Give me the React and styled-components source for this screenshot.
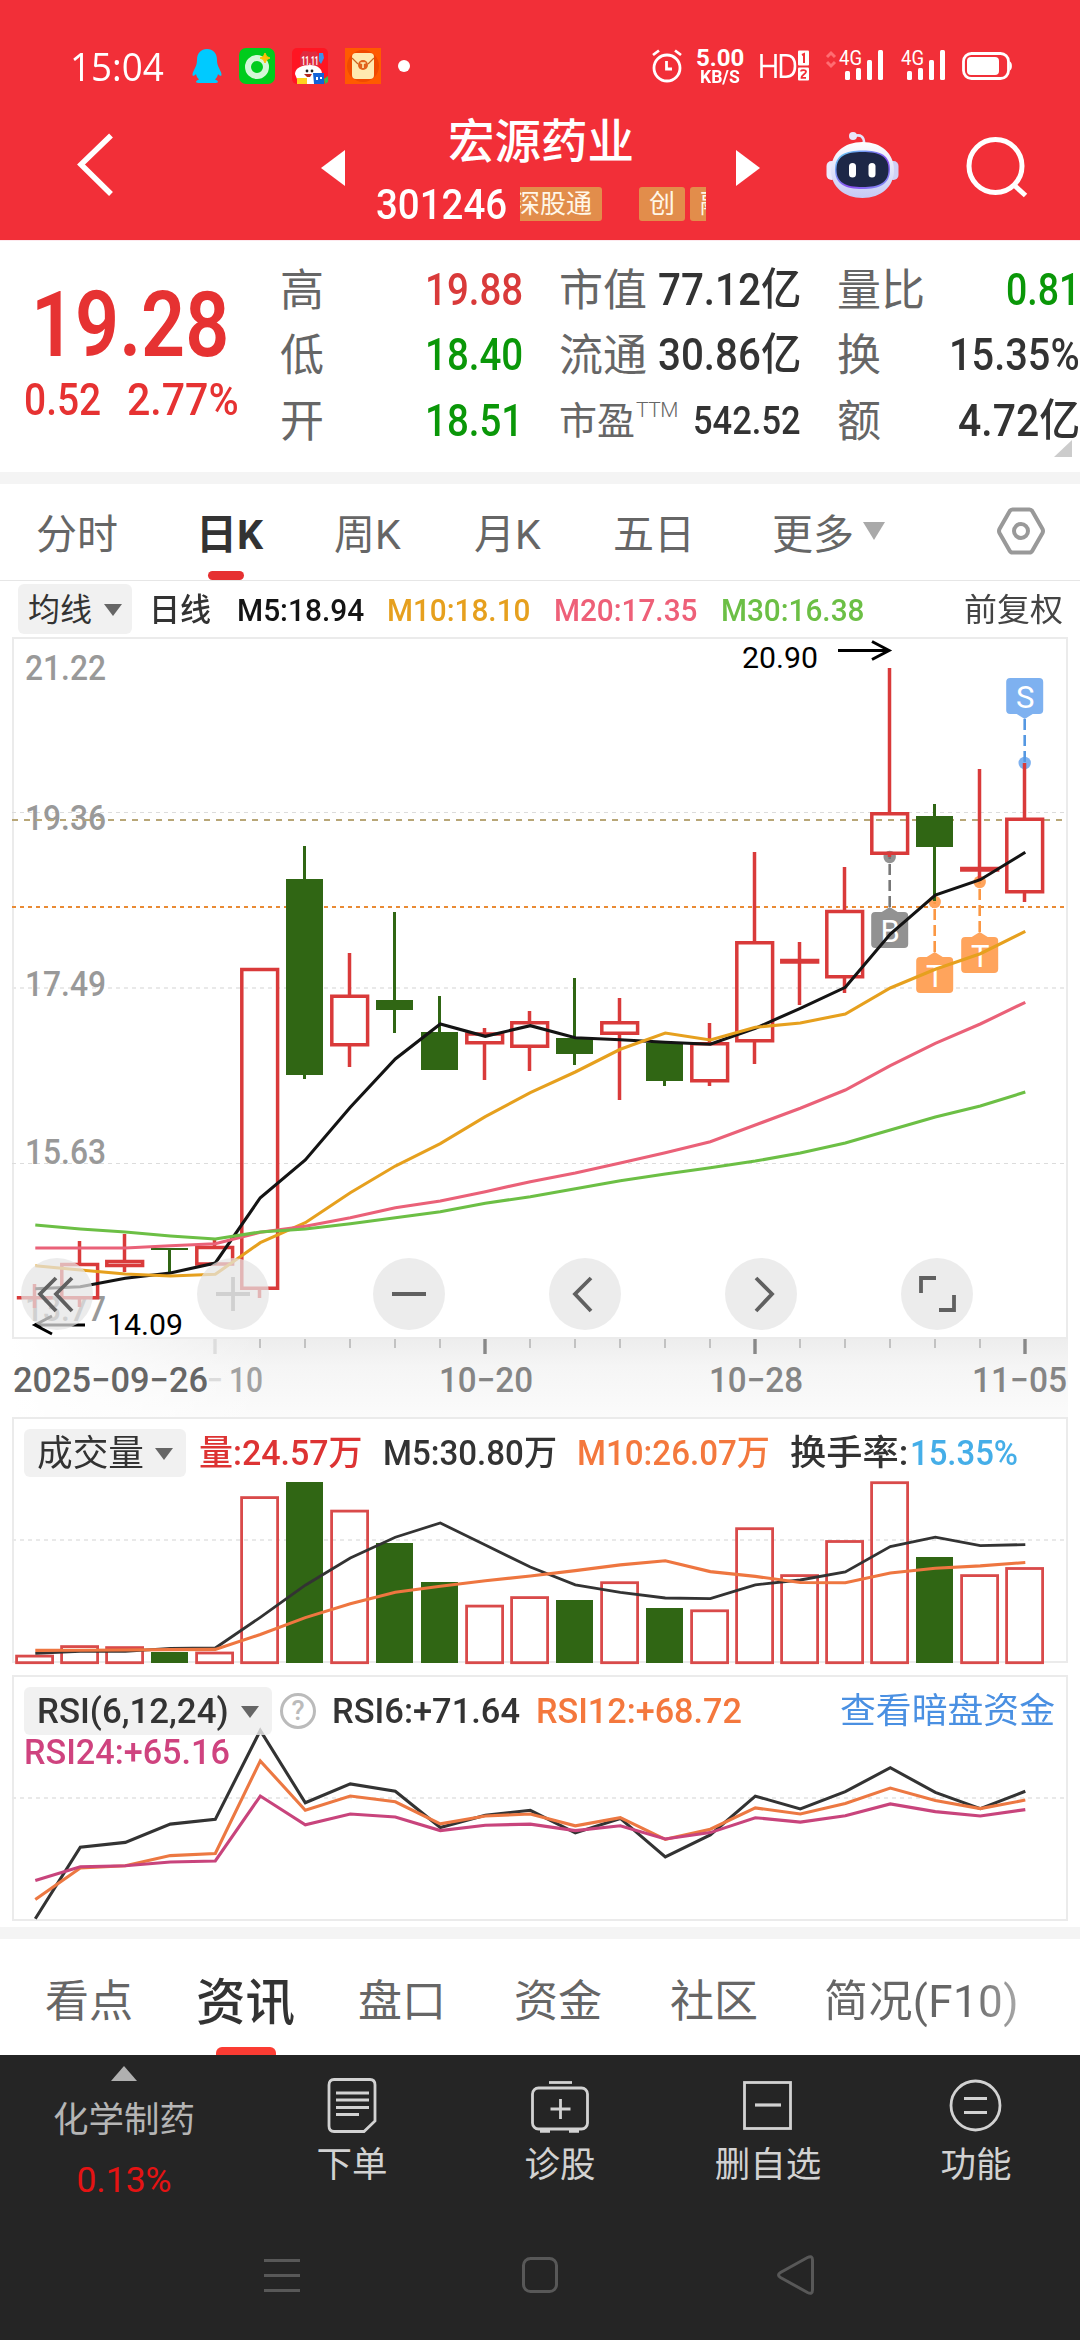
import React, { useLayoutEffect, useRef, useState } from "react";
import styled, { createGlobalStyle } from "styled-components";

const UP = "#d93a3a";
const DOWN = "#306614";
const FONT = `Roboto, "Noto Sans CJK SC", sans-serif`;

const GlobalStyle = createGlobalStyle`
  * {
    box-sizing: border-box;
  }
  body {
    margin: 0;
    background: #fff;
    font-family: ${FONT};
  }
  svg {
    display: block;
    flex: none;
    overflow: visible;
  }
`;
const Page = styled.div`
  width: 1080px;
  height: 2340px;
  overflow: hidden;
  background: #fff;
`;

const FitBox = styled.span`
  display: inline-block;
  flex: none;
  width: ${(p) => p.$w}px;
  white-space: nowrap;
`;
const FitText = styled.span`
  display: inline-block;
  transform-origin: left center;
`;
function Fit({ w, children }) {
  const ref = useRef(null);
  const [scale, setScale] = useState(1);
  useLayoutEffect(() => {
    setScale(w / ref.current.offsetWidth);
  }, [w, children]);
  return (
    <FitBox $w={w}>
      <FitText ref={ref} style={{ transform: `scaleX(${scale})` }}>
        {children}
      </FitText>
    </FitBox>
  );
}

/* ---------- status bar ---------- */
const StatusBar = styled.div`
  height: 100px;
  padding: 32px 68px 0 70px;
  background: #f22f38;
  color: #fff;
  display: flex;
  align-items: center;
  justify-content: space-between;
`;
const StatusGroup = styled.div`
  display: flex;
  align-items: center;
  gap: ${(p) => p.$gap}px;
`;
const Clock = styled.span`
  font-family: "Open Sans", sans-serif;
  font-size: 38px;
  line-height: 40px;
  margin-right: 11px;
`;
const NetSpeed = styled.div`
  display: flex;
  flex-direction: column;
  align-items: center;
  margin-left: -3px;
  font-weight: 700;
  font-size: 24px;
  line-height: 20px;
  > span:last-child {
    font-size: 18px;
    line-height: 17px;
  }
`;
const Dot = styled.i`
  width: 12px;
  height: 12px;
  border-radius: 50%;
  background: #fff;
`;

const PenguinIcon = () => (
  <svg width="30" height="36" viewBox="0 0 30 36">
    <path
      d="M15 1C9 1 5 5 5 12c0 3-.5 5-2 8-1.500 3-3 6-2.400 7.500.6 1 2.400-.3 3.400-1.500.5 2.500 1.500 4 3 5.500-1.500.5-3 1.300-3 2.500 0 1 3 1 10 1h2c7 0 10 0 10-1 0-1.200-1.500-2-3-2.500 1.500-1.500 2.500-3 3-5.500 1 1.200 2.800 2.500 3.400 1.500.6-1.500-.9-4.500-2.400-7.500-1.500-3-2-5-2-8C25 5 21 1 15 1Z"
      fill="#00caff"
    />
  </svg>
);
const GreenAppIcon = () => (
  <svg width="36" height="36" viewBox="0 0 36 36">
    <rect width="36" height="36" rx="7" fill="#00cc1c" />
    <circle cx="18" cy="19" r="9" fill="none" stroke="#d4f7d8" strokeWidth="6" />
    <path d="M26 5l1.700 3.500L31 10l-3.300 1.600L26 15l-1.600-3.400L21 10l3.400-1.500Z" fill="#ffc107" stroke="#ffc107" />
  </svg>
);
const SaleAppIcon = () => (
  <svg width="36" height="36" viewBox="0 0 36 36">
    <rect width="36" height="36" rx="5" fill="#ff1522" />
    <path d="M8 18V8l3-5h4l4 1 5-1 4 7-1 8Z" fill="#e02b3f" />
    <path d="M27 5h4l1 5-3 6-2-3Z" fill="#3f8fe8" />
    <path d="M3 26c0-6 7-9 15-9s12 4 12 9l-3 10H7Z" fill="#fff" />
    <text x="9.500" y="17" fontSize="12" fontWeight="700" fill="#fff" textLength="17" lengthAdjust="spacingAndGlyphs">
      11.11
    </text>
    <circle cx="15" cy="23" r="1.400" fill="#222" />
    <circle cx="20" cy="23" r="1.400" fill="#222" />
    <path d="M12 26h8l-2 3h-3Z" fill="#b3261e" />
    <path d="M5 30h10v6H5Z" fill="#ffd21f" />
    <path d="M21 25h11v11H22Z" fill="#1262d8" />
    <path d="M24 29h2v3h-2zM28 29h2v2h-2z" fill="#fff" />
    <path d="M32 31l4-3v6l-3 2Z" fill="#35c04c" />
  </svg>
);
const EnvelopeAppIcon = () => (
  <svg width="36" height="36" viewBox="0 0 36 36">
    <rect width="36" height="36" fill="#ff5a00" />
    <circle cx="18" cy="18" r="16" fill="#f04a00" />
    <rect x="7" y="5" width="22" height="26" rx="4" fill="#ffeab0" />
    <path d="M7 10l6 6M29 10l-6 6" stroke="#c9651f" strokeWidth="1.200" fill="none" />
    <circle cx="18" cy="17" r="5" fill="#e2621b" />
    <path d="M15.500 15h5M18 15v5" stroke="#ffeab0" strokeWidth="1.600" />
  </svg>
);
const AlarmIcon = () => (
  <svg width="32" height="34" viewBox="0 0 32 34" fill="none" stroke="#fff" strokeWidth="2.800">
    <circle cx="16" cy="19" r="13" />
    <path d="M15.500 12v8h5.500M2 6l6-4.500M30 6l-6-4.500" />
  </svg>
);
const HdIcon = () => (
  <svg width="50" height="34" viewBox="0 0 50 34">
    <path d="M1.500 5v24M15.500 5v24M1.500 17h14" stroke="#fff" strokeWidth="2.600" fill="none" />
    <path d="M21 6.300h5c6 0 9 3.500 9 10.700s-3 10.700-9 10.700h-5Z" stroke="#fff" strokeWidth="2.600" fill="none" />
    <rect x="38" y="1.500" width="11" height="15" rx="1" fill="#fff" />
    <path d="M42 6l2-1v9" stroke="#f22f38" strokeWidth="2" fill="none" />
    <rect x="38" y="18.500" width="11" height="13" rx="1" fill="#fff" />
    <path d="M41 22.500c0-2 5-2 5 .3 0 2-4.500 3.200-4.500 6H46" stroke="#f22f38" strokeWidth="1.800" fill="none" />
  </svg>
);
const SignalIcon = ({ traffic }) => (
  <svg width="58" height="34" viewBox="0 0 58 34" fill="#fff">
    {traffic && (
      <path d="M1 8l4-4 4 4M1 13l4 4 4-4" fill="none" stroke="#ff6d72" strokeWidth="3" />
    )}
    <text x="13" y="16" fontSize="21" textLength="23" lengthAdjust="spacingAndGlyphs">
      4G
    </text>
    <rect x="19" y="22" width="5" height="9" rx="1.500" />
    <rect x="30" y="19" width="5" height="12" rx="1.500" />
    <rect x="41" y="11" width="5" height="20" rx="1.500" />
    <rect x="52" y="1" width="5" height="30" rx="1.500" />
  </svg>
);
const BatteryIcon = () => (
  <svg width="50" height="30" viewBox="0 0 50 30">
    <rect x="1.500" y="2.500" width="45" height="25" rx="8" fill="none" stroke="#fff" strokeWidth="2.800" />
    <rect x="5" y="6" width="32" height="18" rx="4" fill="#fff" />
    <path d="M48 10.500c2.500 1 2.500 8 0 9Z" fill="#fff" />
  </svg>
);

/* ---------- header ---------- */
const Header = styled.header`
  height: 141px;
  padding: 0 0 4px 77px;
  background: #f22f38;
  border-bottom: 1px solid #fde9ee;
  color: #fff;
  display: grid;
  grid-template-columns: 244px 55px 360px 90px 140px 1fr;
  align-items: center;
`;
const StockTitle = styled.div`
  width: 330px;
`;
const StockName = styled.h1`
  margin: 0;
  font-size: 46.5px;
  line-height: 54px;
  font-weight: 500;
  text-align: center;
`;
const StockMeta = styled.div`
  display: flex;
  align-items: center;
  height: 34px;
  margin-top: 18px;
  font-size: 42px;
  font-weight: 500;
`;
const TagStrip = styled.div`
  width: 186px;
  height: 34px;
  margin-left: 13px;
  overflow: hidden;
  display: flex;
`;
const Tag = styled.span`
  flex: none;
  height: 34px;
  padding: 0 10px;
  margin-left: ${(p) => p.$ml}px;
  border-radius: 3px;
  background: #e28d4b;
  color: #fff7e8;
  font-size: 26px;
  font-weight: 400;
  line-height: 35px;
`;

const RobotIcon = () => (
  <svg width="74" height="74" viewBox="0 0 74 74">
    <defs>
      <linearGradient id="shell" x1="0" y1="0" x2="0" y2="1">
        <stop offset="0" stopColor="#ffffff" />
        <stop offset="1" stopColor="#c5c9f4" />
      </linearGradient>
      <linearGradient id="visor" x1="0" y1="0" x2="1" y2="1">
        <stop offset="0" stopColor="#63d8f5" />
        <stop offset="0.6" stopColor="#8a4df0" />
        <stop offset="1" stopColor="#7f9df6" />
      </linearGradient>
    </defs>
    <path d="M28 5c7-2 10 1 10 7" fill="none" stroke="#e4e4fb" strokeWidth="2.600" />
    <circle cx="27" cy="5" r="4" fill="#e9e6fb" />
    <rect x="0.500" y="30" width="10" height="19" rx="5" fill="#eceafc" />
    <rect x="62" y="30" width="10.500" height="19" rx="5" fill="#cfd0f5" />
    <path d="M36.500 11C55 11 68 22 68 39.500c0 16-13 27.500-31.500 27.500S5 55.500 5 39.500C5 22 18 11 36.500 11Z" fill="url(#shell)" />
    <path d="M36.500 19.500C54 19.500 64 24 64 38.500S54 58 36.500 58 9 53 9 38.500 19 19.500 36.500 19.500Z" fill="url(#visor)" />
    <path d="M36.500 21C53 21 62.500 25 62.500 38.500S53 56 36.500 56 10.500 52 10.500 38.500 20 21 36.500 21Z" fill="#1d2747" />
    <rect x="23" y="32" width="7" height="14.500" rx="3.500" fill="#fff" />
    <rect x="42.500" y="32" width="7" height="14.500" rx="3.500" fill="#fff" />
  </svg>
);

/* ---------- quote ---------- */
const Quote = styled.section`
  position: relative;
  height: 231px;
  display: flex;
`;
const PriceBox = styled.div`
  flex: none;
  width: 280px;
  padding: 35px 0 0 24px;
  color: #e63232;
  font-weight: 500;
`;
const Price = styled.div`
  font-size: 90px;
  line-height: 100px;
  font-weight: 600;
  padding-left: 7px;
`;
const Change = styled.div`
  display: flex;
  gap: 26px;
  font-size: 44px;
  line-height: 48px;
`;
const StatGrid = styled.div`
  display: grid;
  grid-template-columns: 243px 242px 243px;
  column-gap: 36px;
  grid-auto-rows: 65.5px;
  padding-top: 16px;
`;
const Stat = styled.div`
  display: flex;
  align-items: center;
  justify-content: space-between;
  font-size: ${(p) => (p.$small ? 38 : 44)}px;
  line-height: 60px;
  color: ${(p) => p.$color || "#333"};
  font-weight: 500;
`;
const StatLabel = styled.span`
  color: #666;
  font-weight: 400;
  font-family: "Noto Sans CJK SC", sans-serif;
  line-height: 56px;
  margin-bottom: 6px;
  > sup {
    display: inline-block;
    font: 300 21px/20px Roboto, sans-serif;
    vertical-align: 17px;
    margin-left: 1px;
    letter-spacing: -0.5px;
  }
`;
const Corner = styled.i`
  position: absolute;
  right: 8px;
  bottom: 15px;
  border-left: 18px solid transparent;
  border-bottom: 17px solid #ccc;
`;
const Separator = styled.div`
  height: 12px;
  background: #f4f4f4;
`;

const STATS = [
  ["高", "19.88", 98, UP],
  ["市值", "77.12亿", 143],
  ["量比", "0.81", 74, "#0a9708"],
  ["低", "18.40", 98, "#0a9708"],
  ["流通", "30.86亿", 143],
  ["换", "15.35%", 131],
  ["开", "18.51", 98, "#0a9708"],
  ["市盈", "542.52", 108],
  ["额", "4.72亿", 122],
];

/* ---------- period tabs ---------- */
const PeriodTabs = styled.nav`
  height: 97px;
  border-bottom: 1px solid #e6e6e6;
  padding-left: 36px;
  display: grid;
  grid-template-columns: 160px 138px 140px 139px 159px 224px 1fr;
`;
const PeriodTab = styled.div`
  position: relative;
  height: 96px;
  display: flex;
  align-items: center;
  gap: 9px;
  color: ${(p) => (p.$active ? "#333" : "#666")};
  font-size: 41px;
  font-weight: ${(p) => (p.$active ? 700 : 400)};
  padding-bottom: 3px;
  &::after {
    content: "";
    display: ${(p) => (p.$active ? "block" : "none")};
    position: absolute;
    left: 12px;
    bottom: 0;
    width: 36px;
    height: 9px;
    border-radius: 5px;
    background: #e63031;
  }
`;
const Caret = styled.i`
  border-left: ${(p) => p.$half}px solid transparent;
  border-right: ${(p) => p.$half}px solid transparent;
  border-top: ${(p) => p.$h}px solid ${(p) => p.$color};
`;

/* ---------- chart panels ---------- */
const Legend = styled.div`
  position: relative;
  display: flex;
  align-items: center;
  height: ${(p) => p.$h}px;
  padding-left: ${(p) => p.$pl}px;
  font-size: ${(p) => p.$size}px;
  line-height: 42px;
  font-weight: 500;
  color: #333;
`;
const Picker = styled.button`
  display: flex;
  align-items: center;
  justify-content: space-between;
  flex: none;
  width: ${(p) => p.$w}px;
  height: ${(p) => p.$h}px;
  padding: 2px ${(p) => p.$px}px 0;
  border: 0;
  border-radius: 6px;
  background: rgba(237, 237, 237, 0.8);
  color: #333;
  font: ${(p) => p.$weight || 400} ${(p) => p.$size}px/40px ${FONT};
`;
const Item = styled.span`
  flex: none;
  white-space: nowrap;
  height: 40px;
  margin-left: ${(p) => p.$ml}px;
  color: ${(p) => p.$color || "#333"};
  font-weight: ${(p) => p.$weight || 500};
`;
const Panel = styled.section`
  position: relative;
  width: 1056px;
  height: ${(p) => p.$h}px;
  margin: 0 12px ${(p) => p.$mb || 0}px;
  > svg {
    position: absolute;
    left: 0;
    top: 0;
  }
`;
const ToolRow = styled.div`
  position: absolute;
  left: 9px;
  bottom: 9px;
  display: flex;
  gap: 104px;
`;
const RoundButton = styled.button`
  width: 72px;
  height: 72px;
  padding: 0;
  border: 0;
  border-radius: 50%;
  background: rgba(228, 228, 228, 0.72);
  color: ${(p) => (p.$faint ? "#d0d0d0" : "#606060")};
`;
const Axis = styled.div`
  height: 78px;
  width: 1056px;
  margin: 0 12px;
  background: linear-gradient(to right, #fff, rgba(255, 255, 255, 0) 260px),
    linear-gradient(#ededed, #f5f5f5 35%, #fbfbfb);
`;
const HelpIcon = styled.span`
  width: 36px;
  height: 36px;
  margin-left: 8px;
  border: 3px solid #bbb;
  border-radius: 50%;
  color: #bbb;
  font-size: 27px;
  line-height: 31px;
  text-align: center;
`;

// [high, top, bottom, low, falling]
const CANDLES = [
  [1284, 1297.7, 1297.7, 1308],
  [1241, 1264.5, 1297.7, 1307],
  [1234, 1261.5, 1265.5, 1272],
  [1248, 1248, 1250, 1272, 1],
  [1239, 1247.5, 1264, 1264],
  [969, 969.5, 1288.3, 1298],
  [846, 879, 1075, 1079, 1],
  [953, 996.3, 1044.7, 1067],
  [912, 1000, 1010, 1033, 1],
  [996, 1032, 1070, 1070, 1],
  [1028, 1034, 1042.7, 1080],
  [1011, 1022.7, 1046.3, 1071],
  [978, 1038, 1054, 1065, 1],
  [998, 1022.7, 1033.3, 1100],
  [1043, 1043, 1081, 1086, 1],
  [1023, 1043.7, 1080.7, 1086],
  [852, 942.7, 1040.7, 1064],
  [942, 960.5, 962, 1005],
  [867, 911.5, 976.7, 993],
  [668, 813.7, 853.3, 857],
  [804, 816, 847, 901, 1],
  [769, 868.5, 870, 880],
  [763, 819.3, 891.7, 902],
];
const MA5 = [1288.7, 1286.7, 1278.3, 1273, 1263, 1197.7, 1160, 1107.3, 1059, 1024, 1036.3, 1025.7, 1037.7, 1039.7, 1042.3, 1044.3, 1028.3, 1008.3, 987.3, 934, 895, 879.7, 852.3];
const MA10 = [1265.7, 1270, 1274, 1276, 1274.3, 1242.7, 1222.7, 1192.7, 1166, 1143.7, 1116.7, 1092.7, 1072, 1049.3, 1033, 1040, 1027.3, 1023, 1014, 988, 969.3, 953.7, 931.3];
const MA20 = [1248, 1248, 1248, 1245.7, 1243.7, 1232.3, 1226.3, 1217.7, 1207.7, 1201, 1191.7, 1181.7, 1173, 1163, 1152.7, 1141.7, 1125, 1108.3, 1090, 1065.7, 1043.3, 1024, 1002.3];
const MA30 = [1225, 1229, 1232, 1236, 1239, 1232, 1229, 1223.7, 1217.7, 1211.7, 1203.3, 1196.7, 1188.7, 1180.7, 1174, 1167.7, 1161, 1153, 1143, 1130, 1117, 1106, 1092];

const VOLUMES = [1654.8, 1645.3, 1646.3, 1652, 1651.7, 1496.3, 1482, 1509.8, 1543, 1582, 1604.8, 1596.3, 1600, 1581.4, 1608, 1609.5, 1527.4, 1574.3, 1540.2, 1481.4, 1557, 1574.3, 1567.2];
const VOL5 = [1653.4, 1651.4, 1651.4, 1648.4, 1648, 1617.3, 1585.2, 1558, 1537.2, 1523, 1545, 1567, 1584.8, 1592.3, 1598, 1598.7, 1584.8, 1580, 1572, 1546.6, 1537.2, 1545.6, 1544.6];
const VOL10 = [1650.4, 1650.2, 1650, 1649.6, 1649.4, 1634.5, 1617.6, 1603.8, 1592.3, 1586.2, 1580.8, 1576, 1570.6, 1564.9, 1560.8, 1571.6, 1576.4, 1582.5, 1582.8, 1573, 1568.3, 1565.9, 1562.5];

const RSI6 = [1918.8, 1847.1, 1842.4, 1824.1, 1819.4, 1730.5, 1802.8, 1783.9, 1791.3, 1827.5, 1815.3, 1810.3, 1832.9, 1818.4, 1856.9, 1835, 1796.1, 1808.9, 1791.7, 1767.7, 1792.4, 1808.6, 1791.3];
const RSI12 = [1899.5, 1868, 1865.7, 1855.6, 1853.5, 1760.9, 1810.3, 1796, 1801.8, 1823.8, 1816, 1814, 1825.8, 1817.7, 1839.3, 1829.2, 1807.9, 1814, 1803.5, 1788, 1800.5, 1808.6, 1800.1];
const RSI24 = [1880.6, 1866.7, 1865.7, 1862, 1861, 1796, 1824.8, 1814, 1817, 1830.6, 1825.2, 1824.1, 1830.6, 1825.8, 1839, 1832.6, 1817.7, 1822.1, 1815.7, 1803.9, 1811.6, 1816, 1809.6];

const xOf = (i) => 34.5 + i * 45;

const Line = ({ data, color, w = 3.1 }) => (
  <polyline
    points={data.map((y, i) => `${xOf(i) + 0.8},${y}`).join(" ")}
    fill="none"
    stroke={color}
    strokeWidth={w}
  />
);
const GridLine = ({ y, color = "#e9e9e9", dash = "4 4", w = 2 }) => (
  <line x1="12" x2="1066" y1={y} y2={y} stroke={color} strokeWidth={w} strokeDasharray={dash} />
);
const Frame = ({ y, h }) => (
  <rect x="13" y={y + 1} width="1054" height={h - 2} fill="none" stroke="#ebebeb" strokeWidth="2" />
);
const Candle = ({ i, data: [high, top, bottom, low, falling] }) => {
  const x = xOf(i);
  if (falling) {
    return (
      <g fill={DOWN}>
        <rect x={x - 1.5} y={high} width="3" height={low - high} />
        <rect x={x - 18.5} y={top} width="37" height={bottom - top} />
      </g>
    );
  }
  return (
    <g stroke={UP} strokeWidth="3.500">
      <path d={`M${x} ${high}V${top}M${x} ${bottom}V${low}`} />
      <path d={`M${x - 17.7} ${top}h35.800V${bottom}h-35.800Z`} fill="none" />
    </g>
  );
};
// trade marks: box sits above (S) or below (B, T) the candle
const Mark = ({ i, letter, y, dotY, color, line, up }) => {
  const x = xOf(i) + 0.2;
  const tip = up ? y + 41 : y - 5;
  const base = up ? y + 36 : y;
  return (
    <g>
      <circle cx={x} cy={dotY} r="6.200" fill={color} />
      <line x1={x} x2={x} y1={tip} y2={dotY} stroke={line} strokeWidth="2.600" strokeDasharray="11 5" />
      <path d={`M${x - 8} ${base}L${x} ${tip}L${x + 8} ${base}Z`} fill={color} />
      <rect x={x - 18.500} y={y} width="37" height="36" rx="4" fill={color} />
      <text x={x + 0.5} y={y + 29.5} fontSize="31" fill="#fff" textAnchor="middle">
        {letter}
      </text>
    </g>
  );
};

const PRICE_LABELS = [
  ["21.22", 680],
  ["19.36", 830],
  ["17.49", 996],
  ["15.63", 1163.500],
  ["13.77", 1321],
];

function PriceChart() {
  return (
    <svg width="1056" height="702" viewBox="12 637 1056 702">
      <Frame y={637} h={702} />
      <GridLine y={812.500} color="#dcdcdc" w={1} />
      <GridLine y={988} />
      <GridLine y={1163.500} color="#dcdcdc" w={1} />
      {PRICE_LABELS.map(([t, y]) => (
        <text key={t} x="25" y={y} fontSize="35" fontWeight="500" fill="#999" textLength="81" lengthAdjust="spacingAndGlyphs">
          {t}
        </text>
      ))}
      <GridLine y={820} color="#b8a677" dash="6 6" />
      <GridLine y={907} color="#e98a34" />
      <Mark i={22} letter="S" y={678} dotY={763} color="#7eb1f0" line="#5598e2" up />
      <Mark i={19} letter="B" y={912} dotY={857} color="#929292" line="#777" />
      <Mark i={20} letter="T" y={957} dotY={902} color="#ffa45c" line="#fb9743" />
      <Mark i={21} letter="T" y={937} dotY={882} color="#ffa45c" line="#fb9743" />
      {CANDLES.map((c, i) => (
        <Candle key={i} i={i} data={c} />
      ))}
      <Line data={MA5} color="#141414" />
      <Line data={MA10} color="#e6a01e" />
      <Line data={MA20} color="#ea6178" />
      <Line data={MA30} color="#6cbf45" />
      <g fontSize="29.500" fill="#000">
        <text x="742" y="668" textLength="76" lengthAdjust="spacingAndGlyphs">20.90</text>
        <text x="107" y="1335" textLength="76" lengthAdjust="spacingAndGlyphs">14.09</text>
      </g>
      <g fill="none" stroke="#000" strokeWidth="3">
        <path d="M838 650.500H888M872 641.500L889 650.500L872 659.500" />
        <path d="M85 1325H36M52 1316L35 1325L52 1334" />
      </g>
    </svg>
  );
}

function DateAxis() {
  return (
    <svg width="1056" height="78" viewBox="12 1339 1056 78">
      {CANDLES.map((_, i) => {
        if (i < 4) return null;
        const major = i === 4 || i === 10 || i === 16 || i === 22;
        return (
          <rect
            key={i}
            x={xOf(i) - (major ? 1.2 : 0.5)}
            y="1339"
            width={major ? 3.4 : 2}
            height={major ? 15 : 9}
            fill={i === 4 ? "#ddd" : major ? "#888" : "#c2c2c2"}
          />
        );
      })}
      <g fontSize="35" fontWeight="500" fill="#858585">
        <text x="13" y="1392" fill="#666" textLength="195" lengthAdjust="spacingAndGlyphs">2025−09−26</text>
        <text x="207" y="1392" fill="#dcdcdc" textLength="16" lengthAdjust="spacingAndGlyphs">−</text>
        <text x="229" y="1392" fill="#a2a2a2" textLength="34" lengthAdjust="spacingAndGlyphs">10</text>
        <text x="439" y="1392" textLength="94" lengthAdjust="spacingAndGlyphs">10−20</text>
        <text x="709" y="1392" textLength="94" lengthAdjust="spacingAndGlyphs">10−28</text>
        <text x="972" y="1392" textLength="95" lengthAdjust="spacingAndGlyphs">11−05</text>
      </g>
    </svg>
  );
}

function VolumeChart() {
  return (
    <svg width="1056" height="247" viewBox="12 1417 1056 247">
      <Frame y={1417} h={246} />
      <GridLine y={1540} />
      {VOLUMES.map((y, i) =>
        CANDLES[i][4] ? (
          <rect key={i} x={xOf(i) - 18.5} y={y} width="37" height={1663 - y} fill={DOWN} />
        ) : (
          <rect key={i} x={xOf(i) - 17.9} y={y + 1.3} width="36" height={1662 - y - 0.6} fill="none" stroke="#d94a4a" strokeWidth="2.800" />
        )
      )}
      <Line data={VOL5} color="#333" w={2.8} />
      <Line data={VOL10} color="#ee7640" />
    </svg>
  );
}

function RsiChart() {
  return (
    <svg width="1056" height="246" viewBox="12 1675 1056 246">
      <Frame y={1675} h={246} />
      <GridLine y={1798} />
      <Line data={RSI6} color="#333" />
      <Line data={RSI12} color="#ec7842" />
      <Line data={RSI24} color="#c8447c" />
    </svg>
  );
}

// icons drawn on the 72px round buttons
const TOOLS = [
  "M35 20L19 36L35 53M51 20L35 36L51 53",
  "M19 36H53M36 19V53",
  "M19 36H53",
  "M42 20L26 36L42 53",
  "M31 20L47 36L31 53",
  "M20 35V20H35M53 37V52H38",
];

/* ---------- bottom ---------- */
const InfoTabs = styled.nav`
  height: 116px;
  padding-left: 45px;
  display: grid;
  grid-template-columns: 151px 162px 156px 156px 154px 1fr;
  overflow: hidden;
`;
const InfoTab = styled.div`
  position: relative;
  display: flex;
  align-items: center;
  padding-top: 2px;
  font-size: ${(p) => (p.$active ? 49.5 : 44)}px;
  font-weight: ${(p) => (p.$active ? 500 : 400)};
  color: ${(p) => (p.$active ? "#333" : "#666")};
  &::after {
    content: "";
    display: ${(p) => (p.$active ? "block" : "none")};
    position: absolute;
    left: 20px;
    bottom: 0;
    width: 60px;
    height: 8px;
    border-radius: 6px 6px 0 0;
    background: #fb3c33;
  }
`;
const Fade = styled.span`
  background: linear-gradient(to right, #666 75%, #aaa);
  background-clip: text;
  -webkit-background-clip: text;
  color: transparent;
  letter-spacing: 0.4px;
`;
const BottomBar = styled.footer`
  height: 285px;
  background: #252525;
`;
const Actions = styled.div`
  display: grid;
  grid-template-columns: 248px 208px 208px 208px 208px;
  height: 185px;
`;
const Industry = styled.div`
  display: flex;
  flex-direction: column;
  align-items: center;
  padding-top: 11px;
  color: #b5b5b5;
  font-size: 35.5px;
  line-height: 40px;
  > i {
    border-left: 13px solid transparent;
    border-right: 13px solid transparent;
    border-bottom: 15px solid #b0b0b0;
    margin-bottom: 19px;
  }
  > span:last-child {
    color: #e51313;
    margin-top: 20px;
  }
`;
const Action = styled.div`
  display: flex;
  flex-direction: column;
  align-items: center;
  padding-top: 22px;
  color: #d2d2d2;
  font-size: 35.5px;
  line-height: 40px;
  > svg {
    margin-bottom: 10px;
  }
`;
const SystemNav = styled.div`
  display: flex;
  align-items: center;
  justify-content: space-between;
  height: 70px;
  padding: 0 264px;
`;

const iconProps = { width: 60, height: 58, viewBox: "0 0 60 58", fill: "none", stroke: "#d2d2d2", strokeWidth: 2.8 };
const ACTIONS = [
  [
    "下单",
    <svg {...iconProps}>
      <path d="M12 2.500H48Q53 2.500 53 8V44L42 54.500H12Q7 54.500 7 49V8Q7 2.500 12 2.500Z" />
      <path d="M14 16H47M14 23H47M14 30.500H47M14 37.500H37" />
    </svg>,
  ],
  [
    "诊股",
    <svg {...iconProps}>
      <path d="M19 5.500H42" />
      <rect x="2.500" y="11" width="55" height="41" rx="6" />
      <path d="M30.500 22V42M20.500 32H40.500" />
      <path d="M10 54H20M39 54H49" strokeWidth="3.500" />
    </svg>,
  ],
  [
    "删自选",
    <svg {...iconProps}>
      <rect x="6.500" y="5.500" width="46" height="46" />
      <path d="M17 28H43" strokeWidth="3.200" />
    </svg>,
  ],
  [
    "功能",
    <svg {...iconProps}>
      <circle cx="29.500" cy="28.500" r="24.500" />
      <path d="M18 21.500H41M18 35.500H41" strokeWidth="3.200" />
    </svg>,
  ],
];

export default function App() {
  return (
    <Page>
      <GlobalStyle />
      <StatusBar>
        <StatusGroup $gap={17}>
          <Clock>
            <Fit w={94}>15:04</Fit>
          </Clock>
          <PenguinIcon />
          <GreenAppIcon />
          <SaleAppIcon />
          <EnvelopeAppIcon />
          <Dot />
        </StatusGroup>
        <StatusGroup $gap={16}>
          <AlarmIcon />
          <NetSpeed>
            <Fit w={48}>5.00</Fit>
            <Fit w={40}>KB/S</Fit>
          </NetSpeed>
          <HdIcon />
          <StatusGroup $gap={4}>
            <SignalIcon traffic />
            <SignalIcon />
          </StatusGroup>
          <BatteryIcon />
        </StatusGroup>
      </StatusBar>

      <Header>
        <svg width="38" height="70" viewBox="0 0 38 70">
          <path d="M34 2.500L4 31.500L34 61" fill="none" stroke="#fff" strokeWidth="5.500" />
        </svg>
        <svg width="24" height="36" viewBox="0 0 24 36">
          <path d="M24 0V36L0 18Z" fill="#fff" />
        </svg>
        <StockTitle>
          <StockName>宏源药业</StockName>
          <StockMeta>
            <Fit w={131}>301246</Fit>
            <TagStrip>
              <Tag $ml={-16}>深股通</Tag>
              <Tag $ml={37}>创</Tag>
              <Tag $ml={5}>融</Tag>
            </TagStrip>
          </StockMeta>
        </StockTitle>
        <svg width="24" height="36" viewBox="0 0 24 36">
          <path d="M0 0V36L24 18Z" fill="#fff" />
        </svg>
        <RobotIcon />
        <svg width="64" height="66" viewBox="0 0 64 66" fill="none" stroke="#fff" strokeWidth="5">
          <circle cx="29.500" cy="31" r="26.500" />
          <path d="M48 50L59.500 60.500" />
        </svg>
      </Header>

      <Quote>
        <PriceBox>
          <Price>
            <Fit w={198}>19.28</Fit>
          </Price>
          <Change>
            <Fit w={77}>0.52</Fit>
            <Fit w={112}>2.77%</Fit>
          </Change>
        </PriceBox>
        <StatGrid>
          {STATS.map(([label, value, w, color]) => (
            <Stat key={label} $color={color} $small={label === "市盈"}>
              <StatLabel>
                {label}
                {label === "市盈" && <sup>TTM</sup>}
              </StatLabel>
              <Fit w={w}>{value}</Fit>
            </Stat>
          ))}
        </StatGrid>
        <Corner />
      </Quote>
      <Separator />

      <PeriodTabs>
        <PeriodTab>分时</PeriodTab>
        <PeriodTab $active>日K</PeriodTab>
        <PeriodTab>周K</PeriodTab>
        <PeriodTab>月K</PeriodTab>
        <PeriodTab>五日</PeriodTab>
        <PeriodTab>
          更多
          <Caret $half={11} $h={18} $color="#a9a9a9" />
        </PeriodTab>
        <PeriodTab>
          <svg width="50" height="48" viewBox="0 0 50 48" fill="none" stroke="#999" strokeWidth="4">
            <path d="M16.500 2.500H33.500Q35.500 2.500 36.500 4.500L46.500 22Q47.500 24 46.500 26L36.500 43.500Q35.500 45.500 33.500 45.500H16.500Q14.500 45.500 13.500 43.500L3.500 26Q2.500 24 3.500 22L13.500 4.500Q14.500 2.500 16.500 2.500Z" />
            <circle cx="25" cy="24" r="7" />
          </svg>
        </PeriodTab>
      </PeriodTabs>

      <Legend $h={56} $pl={18} $size={32}>
        <Picker $w={114} $h={50} $px={10} $size={32}>
          均线
          <Caret $half={9} $h={12} $color="#666" />
        </Picker>
        <Item $ml={17}>
          <Fit w={62}>日线</Fit>
        </Item>
        <Item $ml={26} $color="#141414">
          <Fit w={127}>M5:18.94</Fit>
        </Item>
        <Item $ml={23} $color="#e6a01e">
          <Fit w={143}>M10:18.10</Fit>
        </Item>
        <Item $ml={24} $color="#ee6078">
          <Fit w={143}>M20:17.35</Fit>
        </Item>
        <Item $ml={24} $color="#6cbf45">
          <Fit w={143}>M30:16.38</Fit>
        </Item>
        <Item $ml={100} $color="#444" $weight={400}>
          <Fit w={99}>前复权</Fit>
        </Item>
      </Legend>

      <Panel $h={702}>
        <PriceChart />
        <ToolRow>
          {TOOLS.map((d, i) => (
            <RoundButton key={d} $faint={i === 1}>
              <svg width="72" height="72" viewBox="0 0 72 72">
                <path d={d} fill="none" stroke="currentColor" strokeWidth="3.800" />
              </svg>
            </RoundButton>
          ))}
        </ToolRow>
      </Panel>
      <Axis>
        <DateAxis />
      </Axis>

      <Panel $h={246} $mb={12}>
        <VolumeChart />
        <Legend $h={72} $pl={12} $size={35}>
          <Picker $w={162} $h={48} $px={13} $size={36}>
            <Fit w={107}>成交量</Fit>
            <Caret $half={9.5} $h={12} $color="#666" />
          </Picker>
          <Item $ml={13} $color="#dd3333">
            <Fit w={164}>量:24.57万</Fit>
          </Item>
          <Item $ml={20}>
            <Fit w={174}>M5:30.80万</Fit>
          </Item>
          <Item $ml={20} $color="#f4783d">
            <Fit w={193}>M10:26.07万</Fit>
          </Item>
          <Item $ml={20}>
            <Fit w={118}>换手率:</Fit>
          </Item>
          <Item $ml={2} $color="#45aee8">
            <Fit w={108}>15.35%</Fit>
          </Item>
        </Legend>
      </Panel>

      <Panel $h={246} $mb={6}>
        <RsiChart />
        <Legend $h={72} $pl={12} $size={35}>
          <Picker $w={248} $h={48} $px={13} $size={35} $weight={500}>
            <Fit w={192}>RSI(6,12,24)</Fit>
            <Caret $half={9.5} $h={12} $color="#666" />
          </Picker>
          <HelpIcon>?</HelpIcon>
          <Item $ml={16}>
            <Fit w={188}>RSI6:+71.64</Fit>
          </Item>
          <Item $ml={16} $color="#f4783d">
            <Fit w={206}>RSI12:+68.72</Fit>
          </Item>
          <Item $ml={98} $color="#4a90e2" $weight={400}>
            <Fit w={215}>查看暗盘资金</Fit>
          </Item>
        </Legend>
        <Legend $h={9} $pl={12} $size={35}>
          <Item $color="#cf437f">
            <Fit w={206}>RSI24:+65.16</Fit>
          </Item>
        </Legend>
      </Panel>
      <Separator />

      <InfoTabs>
        <InfoTab>看点</InfoTab>
        <InfoTab $active>资讯</InfoTab>
        <InfoTab>盘口</InfoTab>
        <InfoTab>资金</InfoTab>
        <InfoTab>社区</InfoTab>
        <InfoTab>
          <Fade>简况(F10)</Fade>
        </InfoTab>
      </InfoTabs>

      <BottomBar>
        <Actions>
          <Industry>
            <i />
            <span>化学制药</span>
            <span>0.13%</span>
          </Industry>
          {ACTIONS.map(([label, icon]) => (
            <Action key={label}>
              {icon}
              {label}
            </Action>
          ))}
        </Actions>
        <SystemNav>
          <svg width="40" height="40" viewBox="0 0 40 40" stroke="#585858" strokeWidth="3">
            <path d="M0 5.500H36M0 20.500H36M0 35.500H36" />
          </svg>
          <svg width="38" height="38" viewBox="0 0 38 38" fill="none" stroke="#585858" strokeWidth="3">
            <rect x="2.500" y="2.500" width="33" height="33" rx="7" />
          </svg>
          <svg width="40" height="42" viewBox="0 0 40 42" fill="none" stroke="#585858" strokeWidth="3">
            <path d="M31.500 3.500Q36.500 1 36.500 6V36Q36.500 41 31.500 38.500L4.500 23.500Q0.500 21 4.500 18.500Z" />
          </svg>
        </SystemNav>
      </BottomBar>
    </Page>
  );
}
